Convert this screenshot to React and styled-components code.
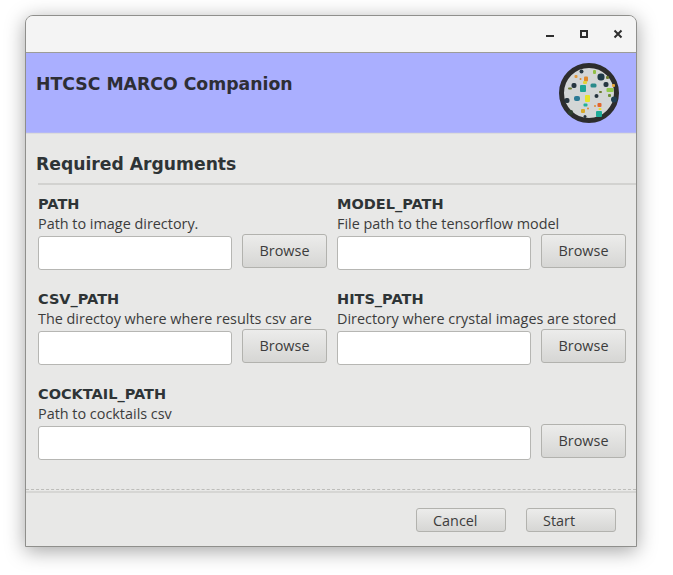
import React from 'react';
import styled, { createGlobalStyle } from 'styled-components';

const GlobalStyle = createGlobalStyle`
  html, body {
    margin: 0;
    background: #ffffff;
  }
`;

const Page = styled.div`
  width: 673px;
  height: 575px;
  box-sizing: border-box;
  padding: 15px 36px 28px 25px;
  overflow: hidden;
`;

const Window = styled.div`
  display: flex;
  flex-direction: column;
  height: 532px;
  box-sizing: border-box;
  border: 1px solid #8f8f8c;
  border-radius: 8px 8px 0 0;
  background: #e8e8e7;
  box-shadow: 0 4px 20px rgba(0, 0, 0, 0.36);
  font-family: "Open Sans", sans-serif;
  color: #3c3c3c;
`;

const TitleBar = styled.div`
  display: flex;
  justify-content: flex-end;
  align-items: center;
  gap: 14px;
  height: 36px;
  padding-right: 8px;
  border-bottom: 1px solid #9c9c98;
  border-radius: 7px 7px 0 0;
  background: #f4f4f4;
`;

const WindowButton = styled.svg`
  width: 20px;
  height: 20px;
  fill: none;
  stroke: #2e2e2e;
  stroke-width: 2;
`;

const Banner = styled.div`
  display: flex;
  justify-content: space-between;
  height: 80px;
  box-sizing: border-box;
  padding: 20px 17px 0 10px;
  background: #aaafff;
  border-bottom: 1px solid #b4b8f5;
`;

const AppTitle = styled.h1`
  margin: 0;
  font: bold 17.3px/22px "DejaVu Sans", sans-serif;
  color: #2e2e35;
`;

const Logo = styled.svg`
  width: 60px;
  height: 60px;
  margin-top: -10px;
`;

const Content = styled.div`
  flex: 1;
  padding-top: 18px;
  border-top: 1px solid #dcdcdc;
`;

const SectionTitle = styled.h2`
  margin: 0 0 0 10px;
  font: bold 17.2px/24px "DejaVu Sans", sans-serif;
  color: #2e3436;
`;

const SectionRule = styled.div`
  height: 2px;
  margin: 7px 0 0 12px;
  background: #d2d2d0;
`;

const Fields = styled.div`
  display: grid;
  grid-template-columns: 289px 289px;
  column-gap: 10px;
  row-gap: 21px;
  padding: 11px 10px 0 12px;
`;

const Field = styled.div`
  grid-column: ${({ $wide }) => ($wide ? '1 / span 2' : 'auto')};
`;

const FieldName = styled.div`
  font: bold 14.5px/16px "DejaVu Sans", sans-serif;
  color: #2e3436;
`;

const FieldHelp = styled.div`
  margin-top: 2px;
  font-size: 14.4px;
  line-height: 20px;
  white-space: nowrap;
  color: #3c3c3c;
`;

const InputRow = styled.div`
  display: flex;
  align-items: flex-start;
  gap: 10px;
`;

const TextInput = styled.input`
  flex: 1;
  min-width: 0;
  height: 34px;
  box-sizing: border-box;
  margin-top: 2px;
  border: 1px solid #b6b6b3;
  border-radius: 3px;
  background: #ffffff;
`;

const Button = styled.button`
  width: ${({ $wide }) => ($wide ? '90px' : '85px')};
  height: ${({ $wide }) => ($wide ? '24px' : '34px')};
  box-sizing: border-box;
  padding: ${({ $wide }) => ($wide ? '2px 0 0 16px' : '0')};
  border: 1px solid #b2b2ae;
  border-radius: 3px;
  background: linear-gradient(#ececeb, #d6d6d4);
  font-family: "Open Sans", sans-serif;
  font-size: 14.4px;
  line-height: 1;
  text-align: ${({ $wide }) => ($wide ? 'left' : 'center')};
  color: #3c3c3c;
`;

const Footer = styled.div`
  display: flex;
  justify-content: flex-end;
  gap: 20px;
  height: 55px;
  box-sizing: border-box;
  padding: 15px 20px 0 0;
  border-top: 2px solid #d6d6d4;
`;

const Dashes = styled.div`
  height: 0;
  border-top: 1px dashed #bdbdba;
  margin-bottom: 1px;
`;

const crystals = [
  { x: 38.5, y: 10.5, w: 7, h: 7, r: 3, c: '#1f3a48' },
  { x: 44.5, y: 19, w: 5, h: 5, r: 2, c: '#263640' },
  { x: 12.5, y: 20, w: 5, h: 5, r: 2, c: '#263640' },
  { x: 20.5, y: 6.5, w: 4, h: 4, r: 2, c: '#2a3a44' },
  { x: 25, y: 13.5, w: 4, h: 5, r: 1, c: '#e08a2c' },
  { x: 21, y: 22, w: 6, h: 7, r: 1, c: '#1fa596' },
  { x: 31.5, y: 20.5, w: 6, h: 4, r: 1.5, c: '#2a8a8a' },
  { x: 47.5, y: 25, w: 7, h: 4, r: 1, c: '#92c94c' },
  { x: 15, y: 33, w: 6, h: 5, r: 2, c: '#2c7a96' },
  { x: 26, y: 32, w: 5, h: 7, r: 1, c: '#e6e42a' },
  { x: 35.5, y: 31, w: 4, h: 4, r: 2, c: '#26343e' },
  { x: 52, y: 33.5, w: 6, h: 6, r: 3, c: '#1f3f52' },
  { x: 5.5, y: 35, w: 5, h: 5, r: 2, c: '#26343e' },
  { x: 38.5, y: 40, w: 4, h: 4, r: 1, c: '#e2662e' },
  { x: 24.5, y: 40.5, w: 4, h: 3, r: 1, c: '#22b09a' },
  { x: 22, y: 46, w: 4, h: 4, r: 1, c: '#d8a92a' },
  { x: 37, y: 48, w: 6, h: 6, r: 1, c: '#1eab98' },
  { x: 24.5, y: 52, w: 3, h: 3, r: 1.5, c: '#26343e' },
  { x: 9, y: 47, w: 5, h: 5, r: 2, c: '#2e3f2e' },
  { x: 34, y: 7, w: 3, h: 4, r: 1, c: '#8fbf45' },
  { x: 47, y: 13, w: 3, h: 3, r: 1, c: '#6d7c2e' },
  { x: 9, y: 24.5, w: 4, h: 2, r: 1, c: '#6d7c2e' },
  { x: 40, y: 28, w: 3, h: 2, r: 1, c: '#6d7c2e' },
  { x: 15.5, y: 12, w: 3, h: 3, r: 1, c: '#e29a3c' },
  { x: 20.5, y: 15, w: 2, h: 2, r: 1, c: '#e08a2c' },
  { x: 53, y: 21, w: 3, h: 3, r: 1, c: '#e8a83a' },
  { x: 35, y: 42, w: 2, h: 2, r: 1, c: '#e2882e' },
  { x: 28, y: 44.5, w: 2, h: 2, r: 1, c: '#e2882e' },
  { x: 39.5, y: 45, w: 3, h: 2, r: 1, c: '#e6e030' },
  { x: 49, y: 31, w: 3, h: 3, r: 1, c: '#6e8e34' },
  { x: 24, y: 18, w: 4, h: 3, r: 1, c: '#e3d33a' },
];

const fields = [
  { name: 'PATH', help: 'Path to image directory.' },
  { name: 'MODEL_PATH', help: 'File path to the tensorflow model' },
  { name: 'CSV_PATH', help: 'The directoy where where results csv are' },
  { name: 'HITS_PATH', help: 'Directory where crystal images are stored' },
  { name: 'COCKTAIL_PATH', help: 'Path to cocktails csv', wide: true },
];

export default function App() {
  return (
    <Page>
      <GlobalStyle />
      <Window>
        <TitleBar>
          <WindowButton viewBox="0 0 20 20">
            <path d="M6 12h8" />
          </WindowButton>
          <WindowButton viewBox="0 0 20 20">
            <path d="M7 7h6v6H7z" />
          </WindowButton>
          <WindowButton viewBox="0 0 20 20">
            <path d="M6.500 6.500l7 7M13.500 6.500l-7 7" />
          </WindowButton>
        </TitleBar>

        <Banner>
          <AppTitle>HTCSC MARCO Companion</AppTitle>
          <Logo viewBox="0 0 60 60">
            <circle cx="30" cy="30" r="27.500" fill="#d3d6d6" stroke="#2d2d2d" strokeWidth="5" />
            {crystals.map((item) => (
              <rect
                key={`${item.x}-${item.y}`}
                x={item.x}
                y={item.y}
                width={item.w}
                height={item.h}
                rx={item.r}
                fill={item.c}
              />
            ))}
          </Logo>
        </Banner>

        <Content>
          <SectionTitle>Required Arguments</SectionTitle>
          <SectionRule />
          <Fields>
            {fields.map((field) => (
              <Field key={field.name} $wide={field.wide}>
                <FieldName>{field.name}</FieldName>
                <FieldHelp>{field.help}</FieldHelp>
                <InputRow>
                  <TextInput type="text" />
                  <Button type="button">Browse</Button>
                </InputRow>
              </Field>
            ))}
          </Fields>
        </Content>

        <Dashes />
        <Footer>
          <Button type="button" $wide>Cancel</Button>
          <Button type="button" $wide>Start</Button>
        </Footer>
      </Window>
    </Page>
  );
}
